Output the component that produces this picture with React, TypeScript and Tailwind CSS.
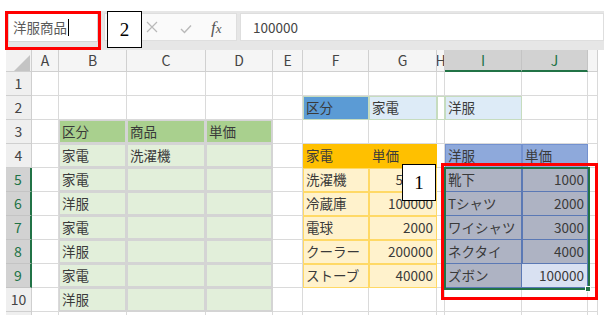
import React from "react";

type Cell = { t?: string; r?: boolean; c: string };

const t1h = "bg-[#a9d08e] border-[#d4d4d4] shadow-[inset_0_0_0_1px_#d4d4d4]";
const t1 = "bg-[#e2efda] border-[#d4d4d4] shadow-[inset_0_0_0_1px_#d4d4d4]";
const kDark = "bg-[#5b9bd5] border-[#c6dcbf] shadow-[inset_1px_1px_0_#c6dcbf]";
const kLight = "bg-[#ddebf7] border-[#c6dcbf] shadow-[inset_1px_1px_0_#c6dcbf]";
const kWhite = "bg-white border-[#c6dcbf] shadow-[inset_1px_1px_0_#c6dcbf]";
const oH = "bg-[#ffc000] border-[#ffc000]";
const oD = "bg-[#fff2cc] border-[#ffd966] shadow-[inset_1px_1px_0_#ffd966]";
const bH = "bg-[#8ea9db] border-[#7391cf] shadow-[inset_1px_1px_0_#7391cf]";
const bD = "bg-[#aeb3c3] border-[#5b79b5] shadow-[inset_1px_0_0_#5b79b5]";
const bA = "bg-[#d9e1f2] border-[#5b79b5]";
const plain = "bg-white border-[#dadada]";

const cells: Record<string, Cell> = {
  F2: { t: "区分", c: kDark },
  G2: { t: "家電", c: kLight },
  H2: { c: kWhite },
  I2: { t: "洋服", c: kLight },
  B3: { t: "区分", c: t1h },
  C3: { t: "商品", c: t1h },
  D3: { t: "単価", c: t1h },
  B4: { t: "家電", c: t1 },
  C4: { t: "洗濯機", c: t1 },
  D4: { c: t1 },
  B5: { t: "家電", c: t1 },
  B6: { t: "洋服", c: t1 },
  B7: { t: "家電", c: t1 },
  B8: { t: "洋服", c: t1 },
  B9: { t: "家電", c: t1 },
  B10: { t: "洋服", c: t1 },
  F4: { t: "家電", c: oH },
  G4: { t: "単価", c: oH },
  F5: { t: "洗濯機", c: oD },
  G5: { t: "50000", r: true, c: oD },
  F6: { t: "冷蔵庫", c: oD },
  G6: { t: "100000", r: true, c: oD },
  F7: { t: "電球", c: oD },
  G7: { t: "2000", r: true, c: oD },
  F8: { t: "クーラー", c: oD },
  G8: { t: "200000", r: true, c: oD },
  F9: { t: "ストーブ", c: oD },
  G9: { t: "40000", r: true, c: oD },
  I4: { t: "洋服", c: bH },
  J4: { t: "単価", c: bH },
  I5: { t: "靴下", c: bD },
  J5: { t: "1000", r: true, c: bD },
  I6: { t: "Tシャツ", c: bD },
  J6: { t: "2000", r: true, c: bD },
  I7: { t: "ワイシャツ", c: bD },
  J7: { t: "3000", r: true, c: bD },
  I8: { t: "ネクタイ", c: bD },
  J8: { t: "4000", r: true, c: bD },
  I9: { t: "ズボン", c: bD },
  J9: { t: "100000", r: true, c: bA },
};

for (const k of ["C5", "C6", "C7", "C8", "C9", "C10", "D5", "D6", "D7", "D8", "D9", "D10"]) {
  cells[k] = { c: t1 };
}

const letters = ["A", "B", "C", "D", "E", "F", "G", "H", "I", "J", ""];
const rows = [1, 2, 3, 4, 5, 6, 7, 8, 9, 10];

export default function App() {
  return (
    <div className="relative w-[610px] h-[325px] overflow-hidden bg-white font-['Noto_Sans_CJK_JP','Noto_Sans',sans-serif] text-[#3a3a3a]">
      <div className="h-[11px]" />
      {/* formula bar */}
      <div className="mx-[6px] h-[39px] bg-[#e6e6e6] flex items-start pt-[2px]">
        <div className="ml-[2px] w-[90px] h-[29px] bg-white border border-[#d6d6d6] flex items-center pl-[4px] text-[13.5px] text-[#5a5a5a] whitespace-nowrap">
          洋服商品
          <span className="ml-[1px] w-[1px] h-[17px] bg-black" />
        </div>
        <div className="ml-[6px] w-[133px] h-[28px] bg-[#fafafa] border border-[#dedede] flex items-center">
          <svg className="ml-[41px]" width="12" height="12" viewBox="0 0 12 12">
            <path d="M1 1L11 11M11 1L1 11" stroke="#b9b9b9" strokeWidth="1.2" fill="none" />
          </svg>
          <svg className="ml-[22px] mt-[4px]" width="12" height="10" viewBox="0 0 12 10">
            <path d="M1 5L4.5 8.5L11 1.5" stroke="#b9b9b9" strokeWidth="1.4" fill="none" />
          </svg>
          <span className="ml-[19px] font-['Liberation_Serif',serif] italic text-[17px] text-[#555] leading-none">
            f<span className="text-[13px]">x</span>
          </span>
        </div>
        <div className="ml-[3px] flex-1 h-[28px] bg-white border border-[#dedede] flex items-center pl-[12px] text-[13.5px] text-[#444]">
          100000
        </div>
      </div>

      {/* sheet */}
      <div className="mx-[6px] grid grid-cols-[26px_27px_68px_79px_67px_30px_66px_68px_8px_77px_66px_10px] grid-rows-[22px_repeat(10,24px)_3px] text-[13.5px]">
        {/* header row */}
        <div className="relative bg-[#f2f2f2] border-r border-b border-[#cfcfcf]">
          <svg className="absolute left-0 top-0" width="26" height="22" viewBox="0 0 26 22">
            <polygon points="8,21 24,21 24,5" fill="#c4c4c4" />
          </svg>
        </div>
        {letters.map((l, i) => {
          const sel = l === "I" || l === "J";
          return (
            <div
              key={"h" + i}
              className={
                sel
                  ? "flex items-center justify-center overflow-hidden bg-[#d2d2d2] border-r border-[#c4c4c4] border-b-2 border-b-[#217346] text-[#217346] text-[14px]"
                  : "flex items-center justify-center overflow-hidden bg-[#f5f5f5] border-r border-b border-[#d0d0d0] text-[#444] text-[14px]"
              }
            >
              {l}
            </div>
          );
        })}
        {/* body rows */}
        {rows.map((r) => {
          const selRow = r >= 5 && r <= 9;
          return (
            <React.Fragment key={"r" + r}>
              <div
                className={
                  selRow
                    ? "flex items-center justify-center bg-[#d2d2d2] border-b border-[#c4c4c4] border-r-2 border-r-[#217346] text-[#217346] text-[14px]"
                    : "flex items-center justify-center bg-[#efefef] border-r border-b border-[#cfcfcf] text-[#444] text-[14px]"
                }
              >
                {r}
              </div>
              {letters.map((l, i) => {
                const cell = cells[l + r];
                const cls = cell ? cell.c : plain;
                return (
                  <div
                    key={l + r + i}
                    className={
                      "flex items-center whitespace-nowrap border-r border-b px-[3px] " +
                      cls +
                      (cell && cell.r ? " justify-end" : "")
                    }
                  >
                    {cell?.t}
                  </div>
                );
              })}
            </React.Fragment>
          );
        })}
        {/* partial row */}
        <div className="bg-[#efefef] border-r border-[#cfcfcf]" />
        {letters.map((l, i) => (
          <div key={"p" + i} className="border-r border-[#dadada]" />
        ))}
      </div>

      {/* selection */}
      <div className="absolute left-[444px] top-[167px] w-[146px] h-[123px] border-2 border-[#217346]" />
      <div className="absolute left-[585px] top-[286px] w-[6px] h-[6px] bg-[#217346] border border-white" />

      {/* annotations */}
      <div className="absolute left-[5px] top-[11px] w-[96px] h-[39px] border-[3px] border-[#ff0000]" />
      <div className="absolute left-[441px] top-[163px] w-[157px] h-[137px] border-[3px] border-[#ff0000]" />
      <div className="absolute left-[107px] top-[11px] w-[35px] h-[37px] bg-white border border-black flex items-center justify-center font-['Liberation_Serif',serif] text-[19px] text-black pt-[2px]">
        2
      </div>
      <div className="absolute left-[402px] top-[164px] w-[34px] h-[37px] bg-white border border-black flex items-center justify-center font-['Liberation_Serif',serif] text-[19px] text-black pt-[2px]">
        1
      </div>
    </div>
  );
}
